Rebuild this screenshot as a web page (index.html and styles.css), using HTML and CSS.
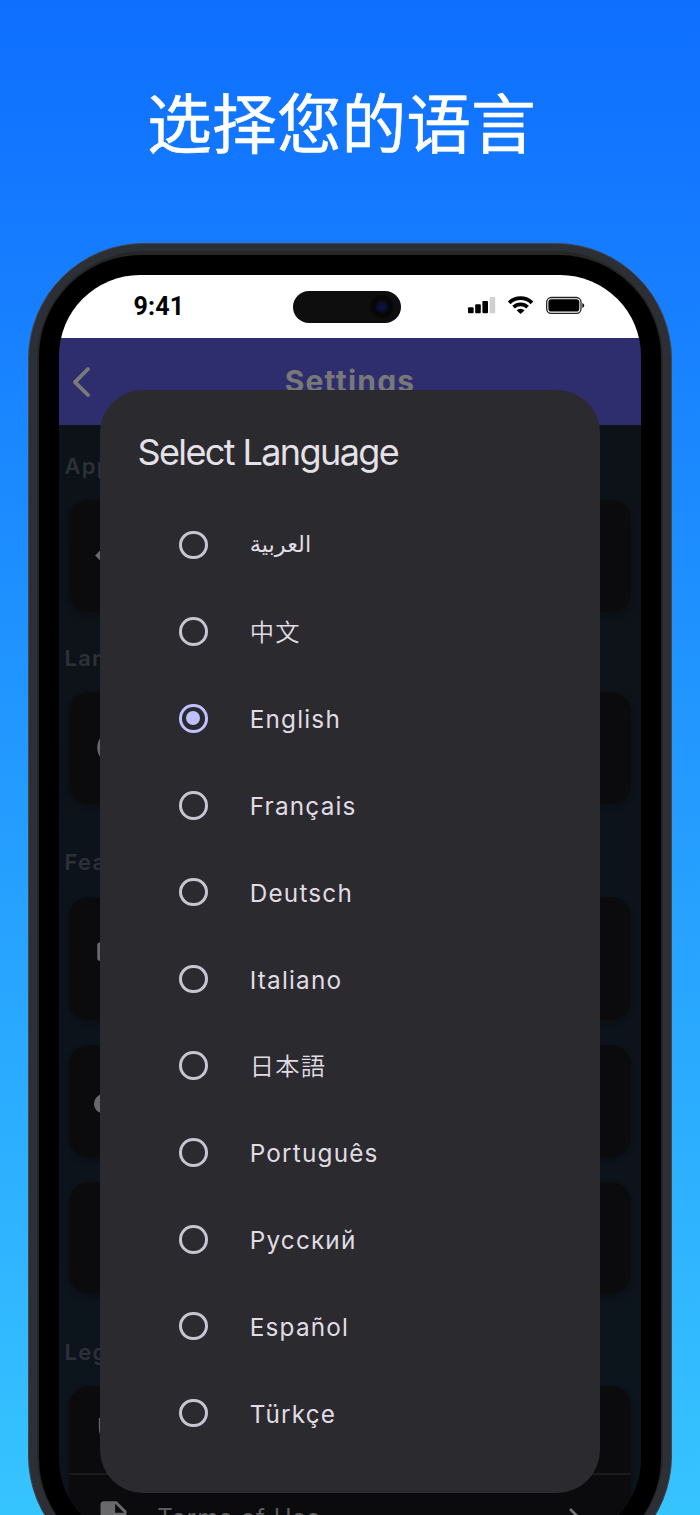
FILE: index.html
```html
<!DOCTYPE html>
<html lang="zh">
<head>
<meta charset="utf-8">
<title>选择您的语言</title>
<link rel="stylesheet" href="styles.css">
</head>
<body>
<main class="poster">
  <h1 class="headline">选择您的语言</h1>
  <div class="phone">
    <div class="rim">
      <div class="bezel">
        <div class="screen">
          <div class="status">
            <span class="time">9:41</span>
            <svg class="island" width="108" height="32" viewBox="0 0 108 32"><rect width="108" height="32" rx="16" fill="#0e0e0e"/><circle cx="89" cy="15.7" r="11.5" fill="#070707"/><circle cx="89" cy="15.7" r="6" fill="#0d0c2c"/><circle cx="89" cy="15.7" r="3.5" fill="#10103c"/></svg>
            <svg class="indicators" width="118" height="20" viewBox="468 295 118 20">
              <rect x="469" y="307.3" width="5.6" height="6" rx="1"/><rect x="476.2" y="304.3" width="5.6" height="9" rx="1"/><rect x="483.4" y="301" width="5.6" height="12.3" rx="1"/><rect x="490.6" y="297" width="5.6" height="16.3" rx="1" fill="#d0d0d0"/>
              <g fill="none" stroke="#000" stroke-width="3.8"><path d="M510.2 302.8a16.3 16.3 0 0 1 22.8 0"/><path d="M514.6 307.2a10 10 0 0 1 14 0"/></g><path d="M517.6 310.3a5.8 5.8 0 0 1 8 0l-4 3.7z"/>
              <rect x="547.7" y="297.5" width="34.3" height="15.8" rx="4.6" fill="none" stroke="#222" stroke-width="1.3"/><rect x="549.4" y="299.2" width="30.9" height="12.4" rx="2.8"/><path d="M583.4 303v5q1.8-.8 1.8-2.5t-1.8-2.5z"/>
            </svg>
          </div>
          <header class="appbar">
            <svg class="back" width="24" height="32" viewBox="0 0 24 32"><path d="M18 3 5 16.200l13 12.800" fill="none" stroke="#7b7a78" stroke-width="3.8" stroke-linecap="round" stroke-linejoin="round"/></svg>
            <span class="appbar-title">Settings</span>
          </header>
          <div class="list">
            <h2 class="section">App</h2>
            <div class="card"><svg class="icon" viewBox="0 0 24 24"><path d="M12 .69 23.310 12 12 23.310.69 12z"/></svg></div>
            <h2 class="section">Lan</h2>
            <div class="card"><svg class="icon" viewBox="0 0 24 24"><circle cx="12" cy="12" r="9" fill="none" stroke="#69696b" stroke-width="2"/><path d="M7 8h14v2H7zm0 6h14v2H7z"/></svg></div>
            <h2 class="section section-features">Fea</h2>
            <div class="card card-tall"><svg class="icon" viewBox="0 0 24 24"><rect x="2" y="2" width="20" height="11.500" rx="2"/></svg></div>
            <div class="card card-next"><svg class="icon" viewBox="0 0 24 24"><path d="M19.350 10.040A7.490 7.490 0 0 0 12 4C9.110 4 6.600 5.640 5.350 8.040A5.994 5.994 0 0 0 0 14c0 3.310 2.690 6 6 6h13c2.760 0 5-2.240 5-5 0-2.640-2.050-4.780-4.650-4.960z"/></svg></div>
            <div class="card card-last"></div>
            <h2 class="section section-legal">Leg</h2>
            <div class="card card-group">
              <div class="line"><svg class="icon" viewBox="0 0 24 24"><path d="M12 1 3 5v6c0 5.550 3.840 10.740 9 12 5.160-1.260 9-6.450 9-12V5zm0 2.200 7 3.100V11c0 4.500-3 8.700-7 9.900-4-1.200-7-5.400-7-9.900V6.300z"/></svg></div>
              <div class="line line-terms"><svg class="icon" viewBox="0 0 24 24"><path d="M14 2H6c-1.100 0-2 .9-2 2v16c0 1.100.9 2 2 2h12c1.100 0 2-.9 2-2V8zm-1 7V3.500L18.500 9z"/></svg><span class="line-label">Terms of Use</span><svg class="chevron" width="14" height="22" viewBox="0 0 14 22"><path d="m2 2 9 9-9 9" fill="none" stroke="#737375" stroke-width="2.800"/></svg></div>
            </div>
          </div>
          <section class="dialog" role="dialog">
            <h2 class="dialog-title">Select Language</h2>
            <ul class="options">
              <li class="option"><i class="radio"></i><span class="label label-ar" lang="ar">العربية</span></li>
              <li class="option"><i class="radio"></i><span class="label label-cjk" lang="zh">中文</span></li>
              <li class="option"><i class="radio radio-on"></i><span class="label">English</span></li>
              <li class="option"><i class="radio"></i><span class="label">Français</span></li>
              <li class="option"><i class="radio"></i><span class="label">Deutsch</span></li>
              <li class="option"><i class="radio"></i><span class="label">Italiano</span></li>
              <li class="option"><i class="radio"></i><span class="label label-cjk" lang="ja">日本語</span></li>
              <li class="option"><i class="radio"></i><span class="label">Português</span></li>
              <li class="option"><i class="radio"></i><span class="label">Русский</span></li>
              <li class="option"><i class="radio"></i><span class="label">Español</span></li>
              <li class="option"><i class="radio"></i><span class="label">Türkçe</span></li>
            </ul>
          </section>
        </div>
      </div>
    </div>
  </div>
</main>
</body>
</html>
```
FILE: styles.css
```css
* { box-sizing: border-box; }
body { margin: 0; font-family: Inter, "Noto Sans", "Noto Sans CJK SC", sans-serif; }
h1, h2, ul { margin: 0; padding: 0; font-weight: 400; }
.poster {
  height: 1515px;
  overflow: hidden;
  background: linear-gradient(#0e6fff 0, #1377ff 160px, #2196ff 700px, #36c4ff 1515px);
}
.headline {
  height: 242.500px;
  padding: 72px 17px 0 0;
  text-align: center;
  font: 400 64.800px/96px "Noto Sans CJK SC", sans-serif;
  -webkit-text-stroke: .5px #fff;
  color: #fff;
}
.phone {
  width: 643.500px;
  height: 1329px;
  margin: 0 auto;
  padding: 7.500px 7.500px;
  border: 1px solid #434446;
  border-radius: 116px;
  background: #2c2f35;
}
.rim { height: 100%; padding: 3.500px 2.500px; border-radius: 108px; background: #262626; }
.bezel { height: 100%; padding: 20px 20.200px; border-radius: 102px; background: #000; }
.screen {
  position: relative;
  height: 100%;
  border-radius: 81px;
  overflow: hidden;
  background: linear-gradient(#0d1217, #0c141d);
}
.status {
  display: grid;
  grid-template-columns: 234px 108px 1fr;
  height: 63.500px;
  padding-top: 1px;
  align-items: center;
  background: #fff;
}
.time { padding-left: 74px; font: 700 25px/30px Roboto, sans-serif; letter-spacing: .2px; color: #000; }
.indicators { margin-left: 66px; margin-top: -3px; }
.appbar {
  display: grid;
  grid-template-columns: 40px 1fr 40px;
  align-items: center;
  height: 87px;
  background: #2e2e6e;
}
.back { margin-left: 10.500px; }
.appbar-title { text-align: center; margin-top: -2px; font-size: 30px; font-weight: 700; letter-spacing: 1.200px; color: #797876; }
.section {
  height: 75px;
  padding: 27px 5px 0;
  font-size: 22px;
  line-height: 28px;
  font-weight: 600;
  letter-spacing: 1.300px;
  color: #2d3038;
}
.card {
  display: flex;
  align-items: center;
  height: 111.500px;
  margin: 0 9.800px;
  padding-left: 25px;
  border-radius: 20px;
  background: #0b0b0d;
  box-shadow: 0 3px 5px rgba(10, 11, 14, .5);
}
.card + .section { height: 80.500px; padding-top: 32px; }
.card + .section-features { height: 93px; padding-top: 44px; }
.card + .section-legal { height: 93px; padding-top: 45px; }
.card-tall { height: 123.500px; }
.card-next { margin-top: 25px; }
.card-last { margin-top: 25px; }
.card-group { display: block; height: 200px; padding: 0; }
.line { display: flex; align-items: center; height: 87px; padding-left: 25px; }
.line-terms { border-top: 2px solid #1b1b1d; }
.icon { flex: none; width: 39px; height: 39px; fill: #69696b; }
.line-label { flex: 1; margin-left: 24px; font-size: 24px; letter-spacing: 1px; color: #5c5c5e; }
.chevron { margin-right: 49px; }
.dialog {
  position: absolute;
  left: 41px;
  right: 41px;
  top: 115px;
  height: 1103.500px;
  padding-top: 39px;
  border-radius: 43px;
  background: #2b2a2f;
}
.dialog-title { padding-left: 37px; font-size: 36px; line-height: 46px; letter-spacing: -1.600px; color: #e5e1e9; }
.options { list-style: none; padding: 27px 0 0 78.800px; }
.option { display: flex; align-items: center; gap: 42px; height: 86.800px; }
.radio { display: grid; place-items: center; width: 28.500px; height: 28.500px; border: 3px solid #c8c5d0; border-radius: 50%; }
.radio-on { border-color: #c0c1ff; }
.radio-on::before { content: ""; width: 14px; height: 14px; border-radius: 50%; background: #c0c1ff; }
.label { padding-top: 2px; font-size: 24.300px; font-weight: 370; line-height: 30px; letter-spacing: 1.200px; color: #e0dce4; }
.label-cjk { margin-top: -2px; padding-top: 0; font-family: "Noto Sans CJK JP", sans-serif; font-weight: 350; }
.label-ar { margin-top: -1px; padding-top: 0; font-family: "DejaVu Sans", sans-serif; font-size: 22.500px; letter-spacing: 0; }
```
